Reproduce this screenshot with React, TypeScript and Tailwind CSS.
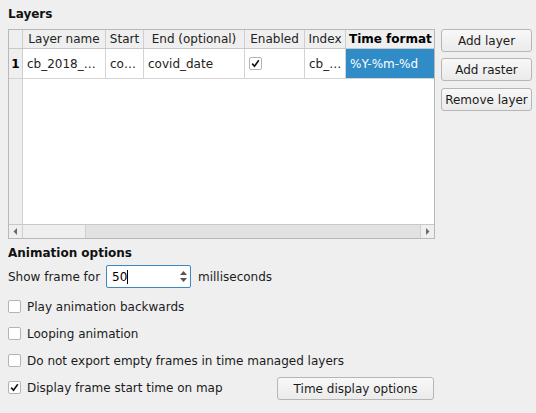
import React from "react";

const font = { fontFamily: '"DejaVu Sans", sans-serif' };

function Check({ checked }: { checked?: boolean }) {
  return (
    <div className="w-[13px] h-[13px] border border-[#b4b4b4] bg-white rounded-[2px] flex items-center justify-center shrink-0">
      {checked && (
        <svg width="9" height="9" viewBox="0 0 9 9">
          <path d="M1.2 4.6 L3.5 7.2 L7.8 1.2" fill="none" stroke="#111" strokeWidth="1.6" />
        </svg>
      )}
    </div>
  );
}

function Button({ label, className = "" }: { label: string; className?: string }) {
  return (
    <div
      className={`h-[23px] border border-[#b6b6b6] rounded-[3px] bg-gradient-to-b from-[#f8f8f8] to-[#ebebeb] flex items-center justify-center text-[12px] text-[#1b1b1b] whitespace-nowrap ${className}`}
    >
      {label}
    </div>
  );
}

const cols = "grid grid-cols-[14px_83px_38px_101px_60px_41px_88px]";

function Table() {
  const headers = ["Layer name", "Start", "End (optional)", "Enabled", "Index"];
  return (
    <div className="w-[427px] h-[210px] shrink-0 border border-[#b8b8b8] bg-white flex flex-col">
      <div className={`${cols} h-[19px] bg-[#efefef] border-b border-[#c8c8c8]`}>
        <div className="border-r border-[#cfcfcf]" />
        {headers.map((h) => (
          <div key={h} className="border-r border-[#cfcfcf] flex items-center justify-center text-[12px] text-[#222] whitespace-nowrap overflow-hidden">
            {h}
          </div>
        ))}
        <div className="flex items-center pl-[3px] text-[12px] font-bold text-black whitespace-nowrap overflow-hidden">
          Time format
        </div>
      </div>
      <div className="flex-1 flex flex-col relative">
        <div className={`${cols} h-[30px] border-b border-[#d4d4d4]`}>
          <div className="bg-[#efefef] border-r border-[#cfcfcf] flex items-center justify-center text-[12px] font-bold">1</div>
          <div className="border-r border-[#d4d4d4] flex items-center pl-[4px] text-[12px] text-[#222]">cb_2018_…</div>
          <div className="border-r border-[#d4d4d4] flex items-center pl-[4px] text-[12px] text-[#222]">co…</div>
          <div className="border-r border-[#d4d4d4] flex items-center pl-[4px] text-[12px] text-[#222]">covid_date</div>
          <div className="border-r border-[#d4d4d4] flex items-center pl-[4px]">
            <Check checked />
          </div>
          <div className="border-r border-[#d4d4d4] flex items-center pl-[4px] text-[12px] text-[#222]">cb_…</div>
          <div className="bg-[#308cc6] flex items-center pl-[4px] text-[12px] text-white">%Y-%m-%d</div>
        </div>
        <div className="flex-1 flex">
          <div className="w-[14px] bg-[#efefef] border-r border-[#cfcfcf]" />
          <div className="flex-1" />
        </div>
      </div>
      <div className="h-[14px] border-t border-[#c8c8c8] bg-[#e2e2e2] flex">
        <div className="w-[14px] border-r border-[#cfcfcf] bg-[#efefef] flex items-center justify-center">
          <svg width="5" height="7" viewBox="0 0 5 7">
            <path d="M4 0 L0.5 3.5 L4 7 Z" fill="#6a6a6a" />
          </svg>
        </div>
        <div className="flex-1 flex">
          <div className="w-[63px] bg-[#efefef] border-r border-[#cfcfcf]" />
          <div className="flex-1" />
        </div>
        <div className="w-[14px] border-l border-[#cfcfcf] bg-[#efefef] flex items-center justify-center">
          <svg width="5" height="7" viewBox="0 0 5 7">
            <path d="M1 0 L4.5 3.5 L1 7 Z" fill="#6a6a6a" />
          </svg>
        </div>
      </div>
    </div>
  );
}

function CheckRow({ label, checked }: { label: string; checked?: boolean }) {
  return (
    <div className="flex items-center gap-[6px] h-[27px]">
      <Check checked={checked} />
      <span className="text-[12px] text-[#1b1b1b]">{label}</span>
    </div>
  );
}

export default function App() {
  return (
    <div className="w-[536px] h-[413px] bg-[#efefef] pl-[8px] pr-[4px] pt-[7px] overflow-hidden" style={font}>
      <div className="text-[12px] font-bold text-[#111] h-[15px] leading-[15px]">Layers</div>
      <div className="flex gap-[6px] mt-[7px]">
        <Table />
        <div className="flex flex-col gap-[6px] w-[91px] shrink-0">
          <Button label="Add layer" />
          <Button label="Add raster" />
          <Button label="Remove layer" className="mt-[1px]" />
        </div>
      </div>
      <div className="text-[12px] font-bold text-[#111] mt-[7px] h-[15px] leading-[15px]">Animation options</div>
      <div className="flex items-center mt-[4px] h-[23px]">
        <span className="text-[12px] text-[#1b1b1b] w-[98px]">Show frame for</span>
        <div className="w-[85px] h-[23px] border border-[#3d87c3] rounded-[2px] bg-white flex">
          <div className="flex-1 flex items-center pl-[5px] text-[12px] text-black">
            50<span className="w-px h-[14px] bg-black" />
          </div>
          <div className="w-[12px] flex flex-col items-center justify-center gap-[3px] pr-[2px]">
            <svg width="7" height="4" viewBox="0 0 7 4"><path d="M0 4 L3.5 0 L7 4 Z" fill="#555" /></svg>
            <svg width="7" height="4" viewBox="0 0 7 4"><path d="M0 0 L3.5 4 L7 0 Z" fill="#555" /></svg>
          </div>
        </div>
        <span className="text-[12px] text-[#1b1b1b] ml-[7px]">milliseconds</span>
      </div>
      <div className="flex flex-col mt-[5px]">
        <CheckRow label="Play animation backwards" />
        <CheckRow label="Looping animation" />
        <CheckRow label="Do not export empty frames in time managed layers" />
        <div className="flex items-center h-[27px]">
          <div className="w-[269px]">
            <CheckRow label="Display frame start time on map" checked />
          </div>
          <Button label="Time display options" className="w-[157px] mt-[2px]" />
        </div>
      </div>
    </div>
  );
}
